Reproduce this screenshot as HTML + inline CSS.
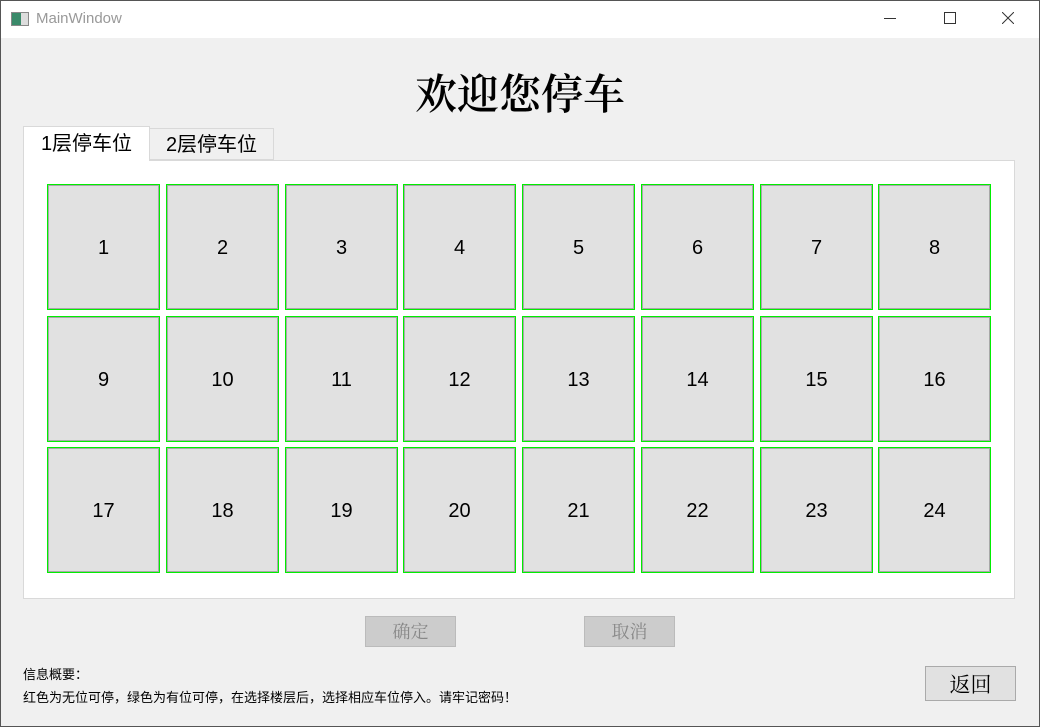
<!DOCTYPE html>
<html><head><meta charset="utf-8"><style>
body{margin:0;width:1040px;height:727px;background:#f0f0f0;position:relative;overflow:hidden;font-family:"Liberation Sans","Noto Sans CJK SC",sans-serif;}
.frame{position:absolute;left:0;top:0;width:1038px;height:725px;border:1px solid #555;}
.title{position:absolute;left:0;top:0;width:1040px;height:38px;background:#fff;}
.title span{position:absolute;left:36px;top:10px;font-size:15px;color:#999;}
.ico{position:absolute;left:11px;top:12px;width:16px;height:12px;border:1px solid #888;background:linear-gradient(90deg,#3a8a6a 0 9px,#ddd 9px);}
.h{position:absolute;top:62px;left:0;width:1040px;text-align:center;font-family:"Noto Serif CJK SC",serif;font-weight:600;font-size:42px;color:#000;}
.panel{position:absolute;left:23px;top:160px;width:990px;height:437px;background:#fff;border:1px solid #d9d9d9;}
.tab{position:absolute;font-size:20px;text-align:center;box-sizing:border-box;border:1px solid #d9d9d9;}
.b{position:absolute;width:113px;height:126px;box-sizing:border-box;border:1px solid #00ee00;box-shadow:inset 0 0 0 1px #a8a8a8;background:#e1e1e1;display:flex;align-items:center;justify-content:center;font-size:20px;color:#000;padding-top:3px;}
.btn{position:absolute;box-sizing:border-box;border:1px solid #bbb;background:#ccc;color:#888;font-family:"Noto Serif CJK SC",serif;font-size:18px;text-align:center;line-height:28px;}
.info{position:absolute;left:23px;font-size:13px;color:#000;}
</style></head><body>
<div class="title"><div class="ico"></div><span>MainWindow</span>
<div style="position:absolute;left:884px;top:18px;width:12px;border-top:1px solid #333"></div>
<div style="position:absolute;left:944px;top:12px;width:10px;height:10px;border:1px solid #333"></div>
<svg style="position:absolute;left:1002px;top:12px" width="12" height="12"><path d="M0 0L12 12M12 0L0 12" stroke="#333" stroke-width="1"/></svg></div>
<div class="h">欢迎您停车</div>
<div class="panel"></div>
<div class="tab" style="left:23px;top:126px;width:127px;height:35px;background:#fff;border-bottom:none;line-height:34px">1层停车位</div>
<div class="tab" style="left:149px;top:128px;width:125px;height:32px;background:#f0f0f0;line-height:32px">2层停车位</div>
<div id="g"></div>
<div class="btn" style="left:365px;top:616px;width:91px;height:31px">确定</div>
<div class="btn" style="left:584px;top:616px;width:91px;height:31px">取消</div>
<div class="btn" style="left:925px;top:666px;width:91px;height:35px;background:#e1e1e1;border-color:#aaa;color:#000;font-size:21px;line-height:34px">返回</div>
<div class="info" style="top:664px">信息概要：</div>
<div class="info" style="top:687px">红色为无位可停，绿色为有位可停，在选择楼层后，选择相应车位停入。请牢记密码！</div>
<div class="frame"></div>
<script>
var xs=[47,166,285,403,522,641,760,878],ys=[184,316,447],h='';
for(var r=0;r<3;r++)for(var c=0;c<8;c++)h+='<div class="b" style="left:'+xs[c]+'px;top:'+ys[r]+'px">'+(r*8+c+1)+'</div>';
document.getElementById('g').innerHTML=h;
</script>
</body></html>
